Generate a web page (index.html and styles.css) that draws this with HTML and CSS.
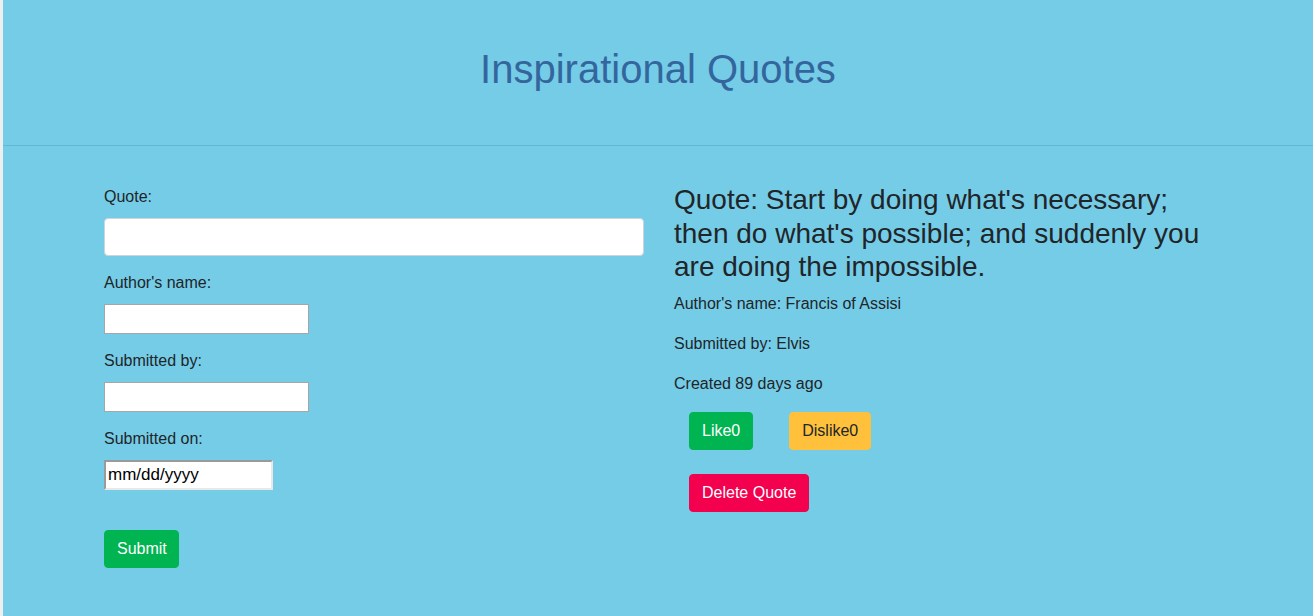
FILE: index.html
```html
<!DOCTYPE html>
<html lang="en">
<head>
<meta charset="utf-8">
<title>Inspirational Quotes</title>
<link rel="stylesheet" href="styles.css">
</head>
<body>
<div class="page">
  <header class="hero">
    <h1 class="hero-title">Inspirational Quotes</h1>
  </header>
  <main class="container">
    <section class="col col-form">
      <form class="quote-form">
        <div class="form-group">
          <label class="form-label" for="quote">Quote:</label>
          <input class="form-control" id="quote" type="text">
        </div>
        <div class="form-group">
          <label class="form-label" for="author">Author's name:</label>
          <input class="plain-input" id="author" type="text">
        </div>
        <div class="form-group">
          <label class="form-label" for="by">Submitted by:</label>
          <input class="plain-input" id="by" type="text">
        </div>
        <div class="form-group">
          <label class="form-label" for="on">Submitted on:</label>
          <input class="date-input" id="on" type="text" placeholder="mm/dd/yyyy">
        </div>
        <button class="btn btn-green btn-submit" type="button">Submit</button>
      </form>
    </section>
    <section class="col col-quote">
      <h3 class="quote-text">Quote: Start by doing what's necessary; then do what's possible; and suddenly you are doing the impossible.</h3>
      <p class="quote-meta">Author's name: Francis of Assisi</p>
      <p class="quote-meta">Submitted by: Elvis</p>
      <p class="quote-meta">Created 89 days ago</p>
      <div class="vote-row">
        <button class="btn btn-green" type="button">Like0</button>
        <button class="btn btn-yellow" type="button">Dislike0</button>
      </div>
      <div class="delete-row">
        <button class="btn btn-red" type="button">Delete Quote</button>
      </div>
    </section>
  </main>
</div>
</body>
</html>
```
FILE: styles.css
```css
* { box-sizing: border-box; }

html, body {
  margin: 0;
  padding: 0;
}

body {
  background: #eceeef;
  padding-left: 3px;
  font-family: "Liberation Sans", Arial, sans-serif;
  font-size: 16px;
  line-height: 24px;
  color: #212529;
}

.page {
  background: #75cce7;
  min-height: 616px;
}

.hero {
  padding: 45px 0 52px;
  border-bottom: 1px solid #63b7d3;
}

.hero-title {
  margin: 0;
  text-align: center;
  font-size: 40px;
  line-height: 48px;
  font-weight: 400;
  color: #34669d;
}

.container {
  width: 1110px;
  margin: 0 auto;
  padding-left: 2px;
  padding-top: 37px;
  box-sizing: content-box;
  display: grid;
  grid-template-columns: 540px 540px;
  column-gap: 30px;
}

.col-form {
  padding-top: 2px;
}

.form-group {
  margin-bottom: 15px;
}

.form-label {
  display: block;
  margin-bottom: 9px;
}

.form-control {
  display: block;
  width: 540px;
  height: 38px;
  padding: 6px 12px;
  font: inherit;
  color: #495057;
  background: #fff;
  border: 1px solid #ced4da;
  border-radius: 4px;
}

.plain-input {
  display: block;
  width: 205px;
  height: 30px;
  padding: 1px 2px;
  font: inherit;
  background: #fff;
  border: 1px solid #a6a6a6;
  border-radius: 0;
}

.date-input {
  display: block;
  width: 169px;
  height: 30px;
  padding: 0 0 0 2px;
  font-family: "Liberation Sans", Arial, sans-serif;
  font-size: 17px;
  color: #000;
  background: #fff;
  border-style: solid;
  border-width: 2px;
  border-color: #9a9a9a #e8e8e8 #e8e8e8 #9a9a9a;
  border-radius: 0;
}

.date-input::placeholder {
  color: #000;
  opacity: 1;
}

.btn {
  display: inline-block;
  padding: 6px 12px;
  font: inherit;
  line-height: 24px;
  border: 1px solid transparent;
  border-radius: 4px;
  cursor: pointer;
}

.btn-green {
  background: #00b451;
  border-color: #00b451;
  color: #fff;
}

.btn-yellow {
  background: #ffc13c;
  border-color: #ffc13c;
  color: #212529;
}

.btn-red {
  background: #f3004f;
  border-color: #f3004f;
  color: #fff;
}

.btn-submit {
  margin-top: 25px;
  padding: 6px 11px 6px 12px;
}

.quote-text {
  margin: 0 0 8px;
  font-size: 28px;
  line-height: 33.6px;
  font-weight: 400;
  color: #212529;
}

.quote-meta {
  margin: 0 0 16px;
}

.vote-row {
  display: flex;
  gap: 36px;
  margin-top: 4px;
  padding-left: 15px;
}

.delete-row {
  display: flex;
  margin-top: 24px;
  padding-left: 15px;
}
```
